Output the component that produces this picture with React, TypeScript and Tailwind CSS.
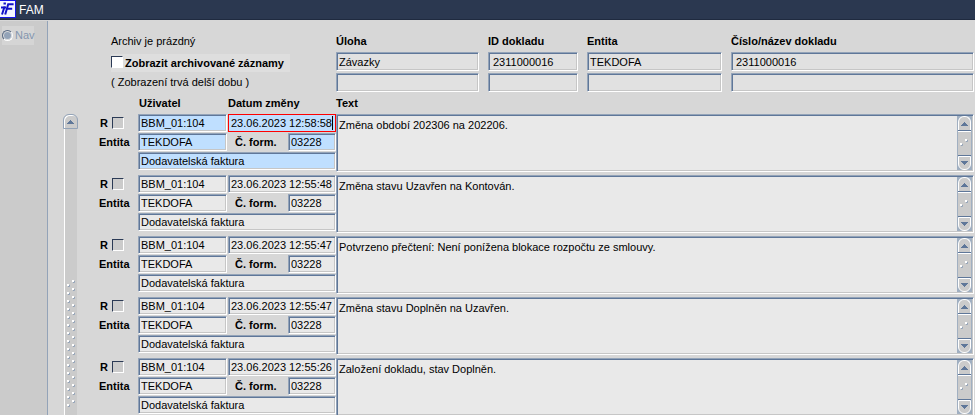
import { useState } from 'react';
import clsx from 'clsx';

interface ArchiveRecord {
  user: string;
  changedAt: string;
  entity: string;
  form: string;
  formName: string;
  text: string;
}

interface DocumentField {
  label: string;
  value: string;
  width: string;
  indent?: boolean;
}

const documentFields: DocumentField[] = [
  { label: 'Úloha', value: 'Závazky', width: 'w-[143px]' },
  { label: 'ID dokladu', value: '2311000016', width: 'w-[90px]', indent: true },
  { label: 'Entita', value: 'TEKDOFA', width: 'w-[135px]' },
  { label: 'Číslo/název dokladu', value: '2311000016', width: 'flex-1', indent: true },
];

const base = { user: 'BBM_01:104', entity: 'TEKDOFA', form: '03228', formName: 'Dodavatelská faktura' };

const records: ArchiveRecord[] = [
  { ...base, changedAt: '23.06.2023 12:58:58', text: 'Změna období 202306 na 202206.' },
  { ...base, changedAt: '23.06.2023 12:55:48', text: 'Změna stavu Uzavřen na Kontován.' },
  { ...base, changedAt: '23.06.2023 12:55:47', text: 'Potvrzeno přečtení: Není ponížena blokace rozpočtu ze smlouvy.' },
  { ...base, changedAt: '23.06.2023 12:55:47', text: 'Změna stavu Doplněn na Uzavřen.' },
  { ...base, changedAt: '23.06.2023 12:55:26', text: 'Založení dokladu, stav Doplněn.' },
];

const bevel =
  'rounded-[1px] border border-t-[#93a3b8] border-l-[#93a3b8] border-b-white border-r-white shadow-[inset_1px_1px_0_#5f7799,inset_-1px_-1px_0_#c6c6c6] outline-none';

const checkbox =
  'size-3 shrink-0 appearance-none border border-t-[#2b3a55] border-l-[#2b3a55] border-b-white border-r-white checked:bg-[#5f7799]';

function Logo() {
  return (
    <svg width="16" height="18" viewBox="0 0 16 18" aria-hidden="true">
      <rect width="16" height="18" fill="#1414e6" />
      <rect x="0" y="1" width="15" height="16" fill="#f4f6ff" />
      <path d="M3.5 3.5h2.4M4.6 6.5L2 14.5" stroke="#1010c8" strokeWidth="2" fill="none" />
      <path d="M13.6 4.2H8.2L5.2 14.5M7.4 8.8h4.8M1 7.5h5" stroke="#1010c8" strokeWidth="2" fill="none" />
    </svg>
  );
}

function Arrow({ down }: { down?: boolean }) {
  return (
    <svg width="7" height="4" viewBox="0 0 7 4" shapeRendering="crispEdges" aria-hidden="true">
      <path d={down ? 'M0 0h7v1H0zM1 1h5v1H1zM2 2h3v1H2zM3 3h1v1H3z' : 'M3 0h1v1H3zM2 1h3v1H2zM1 2h5v1H1zM0 3h7v1H0z'} fill="#5f7799" />
    </svg>
  );
}

function Grip({ rows }: { rows: number }) {
  const height = rows * 8;
  return (
    <svg width="9" height={height} viewBox={`0 0 9 ${height}`} aria-hidden="true">
      {Array.from({ length: rows }, (_, i) => (
        <g key={i}>
          <path d={`M6 ${i * 8 + 2.5}h1.5v-1.5M1 ${i * 8 + 6.5}h1.5v-1.5`} stroke="#93a3b8" fill="none" />
          <rect x="5" y={i * 8} width="2" height="2" fill="#ffffff" />
          <rect x="0" y={i * 8 + 4} width="2" height="2" fill="#ffffff" />
        </g>
      ))}
    </svg>
  );
}

function TextScroll() {
  return (
    <div className="absolute inset-y-0.5 right-0.5 flex w-[15px] flex-col bg-[#a0afc1] px-px">
      <button
        type="button"
        aria-label="Nahoru"
        className="flex h-3.5 items-center justify-center rounded-t-md border border-b-0 border-white bg-[#cbcbcb]"
      >
        <Arrow />
      </button>
      <div className="flex flex-1 items-center justify-center border-y border-[#5f7799] bg-[#cbcbcb] shadow-[inset_0_1px_0_#ffffff]">
        <Grip rows={1} />
      </div>
      <button
        type="button"
        aria-label="Dolů"
        className="flex h-3.5 items-center justify-center rounded-b-md border border-white bg-[#cbcbcb]"
      >
        <Arrow down />
      </button>
    </div>
  );
}

function RecordRow({ record, active }: { record: ArchiveRecord; active: boolean }) {
  const field = clsx(bevel, 'h-[18px] min-w-0 pl-0.5', active ? 'bg-[#bfdfff]' : 'bg-[#e9e9e9]');

  return (
    <div className="flex">
      <div className="w-[39px] shrink-0 font-bold">
        <label className="flex h-[19px] items-center gap-1 pl-px">
          R
          <input type="checkbox" className={clsx(checkbox, 'mb-0.5 bg-[#cbcbcb]')} />
        </label>
        <div className="h-[19px] leading-[19px]">Entita</div>
      </div>

      <div className="flex w-[198px] shrink-0 flex-col gap-px">
        <div className="flex gap-px">
          <input aria-label="Uživatel" readOnly value={record.user} className={clsx(field, 'w-[89px]')} />
          <div className="relative flex flex-1">
            <input
              aria-label="Datum změny"
              readOnly
              value={record.changedAt}
              className={clsx(
                'w-full',
                active ? 'h-[18px] min-w-0 border border-[#ff0000] bg-[#bfdfff] pl-0.5 outline-none' : field,
              )}
            />
            {active && <span className="absolute top-0.5 right-[3px] h-3.5 w-px bg-black" />}
          </div>
        </div>
        <div className="flex">
          <input aria-label="Entita" readOnly value={record.entity} className={clsx(field, 'w-[89px]')} />
          <label className="flex flex-1 items-center pl-2 font-bold">
            <span className="flex-1 leading-[18px]">Č. form.</span>
            <input readOnly value={record.form} className={clsx(field, 'w-12 font-normal')} />
          </label>
        </div>
        <input aria-label="Formulář" readOnly value={record.formName} className={clsx(field, 'w-full')} />
      </div>

      <div className="relative flex h-[58px] flex-1">
        <textarea
          aria-label="Text"
          readOnly
          value={record.text}
          className={clsx(bevel, 'w-full resize-none overflow-hidden bg-[#e9e9e9] py-[3px] pr-5 pl-0.5 leading-[14px]')}
        />
        <TextScroll />
      </div>
    </div>
  );
}

export default function App() {
  const [showArchived, setShowArchived] = useState(false);

  return (
    <div className="flex h-screen flex-col overflow-hidden bg-[#d7d7d7] font-['Liberation_Sans',Arial,sans-serif] text-[11px] text-black">
      <header className="flex h-5 shrink-0 items-start gap-[3px] border-b border-[#1f2a3f] bg-[#2b3850]">
        <Logo />
        <h1 className="text-[12px] leading-5 text-white">FAM</h1>
      </header>

      <div className="flex min-h-0 flex-1">
        <nav className="mt-px w-12 shrink-0 border-r border-[#93a3b8] bg-[#cbcbcb] pt-[5px] pl-0.5">
          <button type="button" className="flex h-[19px] w-8 items-center gap-0.5 bg-[#d5d5d5] text-[#8496af]">
            <span className="size-[11px] shrink-0 rounded-full border border-t-[#5c6c84] border-r-white border-b-white border-l-[#5c6c84] bg-[#93a3b8] shadow-[inset_0_0_0_1px_#dedede]" />
            Nav
          </button>
        </nav>

        <main className="flex min-w-0 flex-1 flex-col pr-px pl-[15px]">
          {/* Document header */}
          <div className="flex pt-3 pl-12">
            <div className="w-[225px] shrink-0">
              <p className="h-[18px] leading-[18px]">Archiv je prázdný</p>
              <label className="mt-1 flex h-[18px] w-[179px] items-center gap-0.5 bg-[#dedede] font-bold whitespace-nowrap">
                <input
                  type="checkbox"
                  checked={showArchived}
                  onChange={(e) => setShowArchived(e.target.checked)}
                  className={clsx(checkbox, 'mb-0.5 bg-white')}
                />
                Zobrazit archivované záznamy
              </label>
              <p className="leading-[20px]">( Zobrazení trvá delší dobu )</p>
            </div>
            <div className="flex flex-1 gap-[9px]">
              {documentFields.map((f) => (
                <div key={f.label} className={clsx('flex min-w-0 flex-col', f.width)}>
                  <label className="flex flex-col font-bold">
                    <span className="h-5 leading-[18px]">{f.label}</span>
                    <input
                      readOnly
                      value={f.value}
                      className={clsx(bevel, 'h-[19px] w-full bg-[#e1e1e1] font-normal', f.indent ? 'pl-1' : 'pl-0.5')}
                    />
                  </label>
                  <input
                    readOnly
                    aria-label={`${f.label} 2`}
                    value=""
                    className={clsx(bevel, 'mt-0.5 h-[19px] w-full bg-[#e1e1e1]')}
                  />
                </div>
              ))}
            </div>
          </div>

          {/* Column titles */}
          <div className="flex h-[22px] pt-1 pl-[76px] leading-[14px] font-bold">
            <span className="w-[89px]">Uživatel</span>
            <span className="w-[108px]">Datum změny</span>
            <span>Text</span>
          </div>

          {/* Records */}
          <div className="flex min-h-0 flex-1">
            <div className="flex w-[15px] shrink-0 flex-col items-center">
              <button
                type="button"
                aria-label="Předchozí záznamy"
                className="flex h-[15px] w-full shrink-0 items-center justify-center rounded-t-md border border-[#93a3b8] bg-[#cbcbcb] shadow-[inset_1px_1px_0_#ffffff]"
              >
                <Arrow />
              </button>
              <div className="flex w-[13px] flex-1 justify-center border-l border-white bg-[#cbcbcb] pt-[151px]">
                <Grip rows={16} />
              </div>
            </div>
            <div className="flex flex-1 flex-col gap-[3px] pl-[21px]">
              {records.map((record, index) => (
                <RecordRow key={index} record={record} active={index === 0} />
              ))}
            </div>
          </div>
        </main>
      </div>
    </div>
  );
}
